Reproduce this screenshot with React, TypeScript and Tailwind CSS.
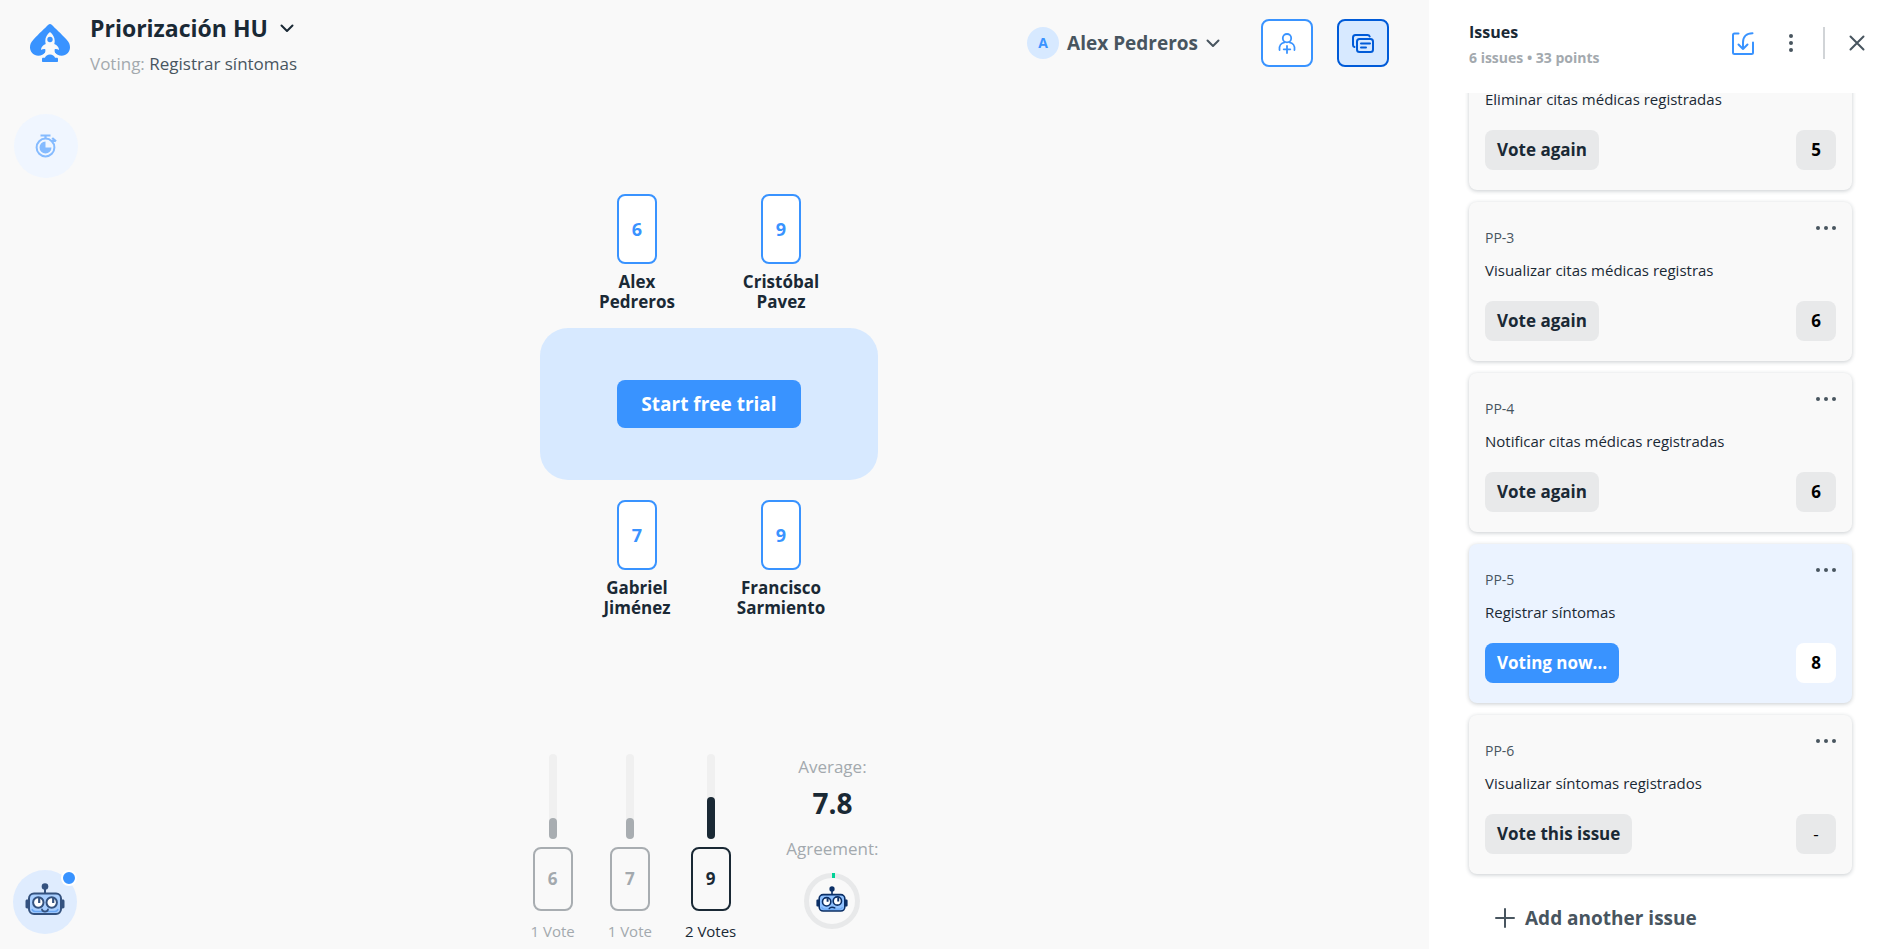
import type { ReactNode } from 'react';

type Issue = { id?: string; title: string; points: string; action: string; active?: boolean };

const issues: Issue[] = [
  { title: 'Eliminar citas médicas registradas', points: '5', action: 'Vote again' },
  { id: 'PP-3', title: 'Visualizar citas médicas registras', points: '6', action: 'Vote again' },
  { id: 'PP-4', title: 'Notificar citas médicas registradas', points: '6', action: 'Vote again' },
  { id: 'PP-5', title: 'Registrar síntomas', points: '8', action: 'Voting now...', active: true },
  { id: 'PP-6', title: 'Visualizar síntomas registrados', points: '-', action: 'Vote this issue' },
];

const topPlayers = [
  { first: 'Alex', last: 'Pedreros', vote: '6' },
  { first: 'Cristóbal', last: 'Pavez', vote: '9' },
];

const bottomPlayers = [
  { first: 'Gabriel', last: 'Jiménez', vote: '7' },
  { first: 'Francisco', last: 'Sarmiento', vote: '9' },
];

const results = [
  { value: '6', votes: 1, top: false },
  { value: '7', votes: 1, top: false },
  { value: '9', votes: 2, top: true },
];

const totalVotes = 4;

function Chevron() {
  return (
    <svg width="14" height="9" viewBox="0 0 14 9" fill="none" stroke="currentColor" strokeWidth="2" strokeLinecap="round" strokeLinejoin="round" aria-hidden="true">
      <path d="M1.500 1.500 7 7l5.500-5.500" />
    </svg>
  );
}

function Logo() {
  return (
    <svg width="40" height="38" viewBox="0 0 40 38" aria-hidden="true">
      <path fill="#3993ff" d="M20 0c.7 0 1.200.3 1.700.8C25 4.200 31 9.600 36.500 15.500 39 18.200 40 20.500 40 23.200c0 4.800-3.600 8.500-8.300 8.500-3.200 0-5.200-1.300-7.200-3.400h-9c-2 2.100-4 3.400-7.200 3.400C3.600 31.700 0 28 0 23.200c0-2.700 1-5 3.500-7.700C9 9.600 15 4.200 18.300.8c.5-.5 1-.8 1.700-.8z" />
      <path fill="#f9f9f9" d="M20 8c2.800 2.300 4.700 5.400 4.700 8.800 0 1.100-.1 2.100-.4 3.200 2.900 1.200 4.700 3.200 4.700 5.900-1.500-.8-3-1-4.300-.7-.4 2.300.2 4.300 2.300 6.300h-2.700C23.500 30.700 21.700 30 20 30s-3.500.7-4.300 1.500H13c2.100-2 2.700-4 2.300-6.300-1.300-.3-2.800-.1-4.300.7 0-2.700 1.800-4.700 4.700-5.900-.3-1.100-.4-2.100-.4-3.200C15.300 13.400 17.200 10.300 20 8z" />
      <circle cx="20" cy="15.500" r="2.700" fill="#3993ff" />
      <path fill="#3993ff" d="M20 30.500c2.500 0 4.400 1.300 5.100 3.300h1.700c.7 0 1.200.5 1.200 1.200v2c0 .6-.4 1-1 1H13c-.6 0-1-.4-1-1v-2c0-.7.5-1.200 1.200-1.200h1.700c.7-2 2.600-3.300 5.100-3.300z" />
    </svg>
  );
}

function Stopwatch() {
  return (
    <svg width="22" height="24" viewBox="0 0 22 24" fill="none" aria-hidden="true">
      <circle cx="10.500" cy="13.500" r="8.900" stroke="#85bbff" strokeWidth="2" />
      <path d="M10.500 7.500v6h6a6 6 0 1 1-6-6z" fill="#85bbff" />
      <path d="M5.500 1.500h10M10.500 1.500v3M17.200 4l3.800 3.400M19 5.400l-1.800 1.800" stroke="#85bbff" strokeWidth="2.200" />
    </svg>
  );
}

function InviteIcon() {
  return (
    <svg width="18" height="21" viewBox="0 0 18 21" fill="none" stroke="#3993ff" strokeWidth="1.800" strokeLinecap="round" aria-hidden="true">
      <circle cx="9" cy="5.200" r="4.200" />
      <path d="M1.500 17c-.6-4.300 1.800-7 5-7.600M16.500 17c.6-4.300-1.800-7-5-7.600M9 13v7M5.700 16.300h6.600" />
    </svg>
  );
}

function CardsIcon() {
  return (
    <svg width="22" height="19" viewBox="0 0 22 19" fill="none" stroke="#005bd8" strokeWidth="2" strokeLinecap="round" strokeLinejoin="round" aria-hidden="true">
      <rect x="5" y="5" width="16" height="13" rx="2.500" />
      <path d="M2.500 13C1.500 12.700 1 12 1 11V3.500C1 2 2 1 3.500 1h12c1.200 0 1.900.5 2.200 1.500M9 9.500h9M9 13.500h5" />
    </svg>
  );
}

function ImportIcon() {
  return (
    <svg width="22" height="23" viewBox="0 0 22 23" fill="none" stroke="#3993ff" strokeWidth="2" strokeLinecap="round" strokeLinejoin="round" aria-hidden="true">
      <path d="M6.500 1.500h-4C1.700 1.500 1 2.200 1 3v17.500c0 .8.700 1.500 1.500 1.500h17c.8 0 1.500-.7 1.500-1.500V10.500" />
      <path d="M20.500 1.300C14.500 1.300 11 4.800 11 10.500V17M6.500 12.500 11 17l4.500-4.500" />
    </svg>
  );
}

function Robot({ mood }: { mood: 'happy' | 'unsure' }) {
  const line = mood === 'happy' ? '#34527f' : '#0b2f66';
  const face = mood === 'happy' ? '#a9cfff' : '#8fc1ff';
  return (
    <svg className={mood === 'happy' ? 'h-8 w-10' : 'h-[26px] w-8'} viewBox="0 0 40 32" fill="none" aria-hidden="true">
      <path d="M20 4v7" stroke={line} strokeWidth="2" />
      <circle cx="20" cy="3.500" r="3.300" fill={line} />
      <path d="M4 16.500H2.200C1 16.500.5 17 .5 18.200v5.600c0 1.200.5 1.700 1.700 1.700H4zM36 16.500h1.800c1.200 0 1.700.5 1.700 1.700v5.600c0 1.200-.5 1.700-1.700 1.700H36z" fill={line} />
      <rect x="4" y="10.500" width="32" height="20.500" rx="5" fill={face} stroke={line} strokeWidth="2" />
      <path d="M7 26c.5 1.800 1.500 2.600 3.500 2.600h19c2 0 3-.8 3.500-2.600" stroke="#6ba8f5" strokeWidth="1.500" />
      <circle cx="13.300" cy="19.500" r="5.200" fill="#fff" stroke={line} strokeWidth="2" />
      <circle cx="26.700" cy={mood === 'happy' ? 19.5 : 18.5} r="5.200" fill="#fff" stroke={line} strokeWidth="2" />
      {mood === 'happy' ? (
        <>
          <path d="M14.200 15v5M28.200 15v5" stroke={line} strokeWidth="2.200" />
          <path d="M17 26.500c.6 2.700 5.400 2.700 6 0" stroke={line} strokeWidth="1.800" strokeLinecap="round" />
        </>
      ) : (
        <>
          <path d="M14.500 15v4.500M27.800 14.500V19" stroke={line} strokeWidth="2.400" />
          <path d="M16.500 28c1.500-2 5-2 7-.8" stroke={line} strokeWidth="1.800" strokeLinecap="round" />
        </>
      )}
    </svg>
  );
}

function Player({ first, last, vote }: { first: string; last: string; vote: string }) {
  return (
    <li className="flex w-36 flex-col items-center">
      <div className="flex h-[70px] w-10 items-center justify-center rounded-lg border-2 border-[#3993ff] bg-white text-lg font-bold text-[#3993ff]">
        {vote}
      </div>
      <div className="mt-2 text-center text-[17px] font-bold leading-5 text-[#1a2935]">
        {first}
        <br />
        {last}
      </div>
    </li>
  );
}

function IconButton({ label, className, children }: { label: string; className: string; children: ReactNode }) {
  return (
    <button type="button" aria-label={label} className={`flex items-center justify-center ${className}`}>
      {children}
    </button>
  );
}

function IssueCard({ issue }: { issue: Issue }) {
  return (
    <li
      className={`shrink-0 rounded-lg px-4 pb-5 pt-[18px] shadow-[0_1px_4px_rgba(26,41,53,0.24)] ${issue.active ? 'bg-[#ebf3ff]' : 'bg-[#f9f9f9]'}`}
    >
      {issue.id && (
        <div className="flex items-start justify-between">
          <span className="mt-2 text-sm leading-5 text-[#48555f]">{issue.id}</span>
          <IconButton label={`Options for ${issue.id}`} className="h-4 text-[#48555f]">
            <svg width="20" height="4" viewBox="0 0 20 4" fill="currentColor" aria-hidden="true">
              <circle cx="2" cy="2" r="2" />
              <circle cx="10" cy="2" r="2" />
              <circle cx="18" cy="2" r="2" />
            </svg>
          </IconButton>
        </div>
      )}
      <p className="mt-[11px] text-[15px] leading-[22px] text-[#1a2935]">{issue.title}</p>
      <div className="mt-5 flex items-center justify-between">
        <button
          type="button"
          className={`h-10 rounded-lg px-3 text-[17px] font-bold ${issue.active ? 'bg-[#3993ff] text-white' : 'bg-[#e8e9ea] text-[#1a2935]'}`}
        >
          {issue.action}
        </button>
        <button
          type="button"
          aria-label={`Points: ${issue.points}`}
          className={`h-10 w-10 rounded-lg text-[17px] text-black ${issue.points === '-' ? 'font-normal' : 'font-bold'} ${issue.active ? 'bg-white' : 'bg-[#e8e9ea]'}`}
        >
          {issue.points}
        </button>
      </div>
    </li>
  );
}

export default function App() {
  return (
    <div className="flex h-screen overflow-hidden bg-[#f9f9f9] font-['Open_Sans','Noto_Sans',sans-serif] text-[#1a2935]">
      <main className="relative flex min-w-0 flex-1 flex-col">
        <header className="flex items-start justify-between pl-[30px] pr-10">
          <div className="flex items-start">
            <a href="#" aria-label="Home" className="mt-6">
              <Logo />
            </a>
            <div className="ml-5 pt-3">
              <h1>
                <button type="button" className="flex items-center gap-3 text-[23px] font-bold leading-8">
                  Priorización HU
                  <Chevron />
                </button>
              </h1>
              <p className="mt-2 text-[17px] leading-6 text-[#48555f]">
                <span className="text-[#a3a9ae]">Voting:</span> Registrar síntomas
              </p>
            </div>
          </div>
          <div className="flex items-center pt-[19px]">
            <button type="button" className="flex items-center text-[19px] font-bold text-[#48555f]">
              <span className="mr-2 flex h-8 w-8 items-center justify-center rounded-full bg-[#d7e9ff] text-sm text-[#3993ff]">A</span>
              Alex Pedreros
              <span className="ml-2">
                <Chevron />
              </span>
            </button>
            <IconButton label="Invite players" className="ml-[41px] h-12 w-[52px] rounded-lg border-2 border-[#3993ff] bg-white">
              <InviteIcon />
            </IconButton>
            <IconButton label="Show issues" className="ml-6 h-12 w-[52px] rounded-lg border-2 border-[#005bd8] bg-[#d7e9ff]">
              <CardsIcon />
            </IconButton>
          </div>
        </header>

        <IconButton label="Timer" className="absolute left-3.5 top-[114px] h-16 w-16 rounded-full bg-[#f0f6ff]">
          <Stopwatch />
        </IconButton>

        <section aria-label="Table" className="flex flex-1 flex-col items-center justify-center pb-[18px] pr-[11px]">
          <ul className="flex">
            {topPlayers.map((p) => (
              <Player key={p.first} {...p} />
            ))}
          </ul>
          <div className="my-4 flex w-[338px] items-center justify-center rounded-[28px] bg-[#d7e9ff] py-[52px]">
            <button type="button" className="h-12 rounded-lg bg-[#3993ff] px-6 text-[19px] font-bold text-white">
              Start free trial
            </button>
          </div>
          <ul className="mt-1 flex">
            {bottomPlayers.map((p) => (
              <Player key={p.first} {...p} />
            ))}
          </ul>
        </section>

        <section aria-label="Results" className="flex items-end justify-center gap-[50px] pb-2 pr-5">
          <ul className="flex gap-[33px]">
            {results.map((r) => (
              <li key={r.value} className={`flex flex-col items-center ${r.top ? 'text-[#1a2935]' : 'text-[#a3a9ae]'}`}>
                <div className="flex h-[85px] w-2 items-end rounded-full bg-[#f0f0f0]">
                  <div
                    className={`w-2 rounded-full ${r.top ? 'bg-[#1a2935]' : 'bg-[#a8adb1]'}`}
                    style={{ height: `${(r.votes / totalVotes) * 100}%` }}
                  />
                </div>
                <div
                  className={`mt-2 flex h-16 w-10 items-center justify-center rounded-lg border-2 text-[17px] font-bold ${r.top ? 'border-[#1a2935]' : 'border-[#a8adb1]'}`}
                >
                  {r.value}
                </div>
                <span className="mt-2.5 text-[15px] leading-5">{r.votes === 1 ? '1 Vote' : `${r.votes} Votes`}</span>
              </li>
            ))}
          </ul>
          <div className="flex flex-col items-center pb-3 text-[17px] leading-6 text-[#a3a9ae]">
            <span>Average:</span>
            <span className="mt-1.5 text-[28px] font-bold leading-9 text-[#1a2935]">7.8</span>
            <span className="mt-4">Agreement:</span>
            <div className="mt-3 grid h-14 w-14 place-items-center">
              <svg className="col-start-1 row-start-1 h-14 w-14" viewBox="0 0 56 56" fill="none" aria-hidden="true">
                <circle cx="28" cy="28" r="25.500" stroke="#e8e9ea" strokeWidth="5" />
                <path d="M28 2.500h3" stroke="#00d296" strokeWidth="5" />
              </svg>
              <div className="col-start-1 row-start-1 -mt-1">
                <Robot mood="unsure" />
              </div>
            </div>
          </div>
        </section>

        <div className="absolute bottom-[15px] left-[13px]">
          <IconButton label="Assistant" className="h-16 w-16 rounded-full bg-[#dfecfe]">
            <span className="-mt-1.5">
              <Robot mood="happy" />
            </span>
          </IconButton>
          <span className="absolute right-0 top-0 h-4 w-4 rounded-full border-2 border-white bg-[#3993ff]" />
        </div>
      </main>

      <aside aria-label="Issues" className="flex w-[461px] shrink-0 flex-col bg-white">
        <header className="flex h-[93px] shrink-0 items-start justify-between pl-10 pr-[25px]">
          <div className="pt-5">
            <h2 className="text-base font-bold leading-6">Issues</h2>
            <p className="mt-1 text-sm font-bold leading-5 text-[#a3a9ae]">6 issues • 33 points</p>
          </div>
          <div className="flex items-center pt-[27px] text-[#48555f]">
            <IconButton label="Import issues" className="h-8">
              <ImportIcon />
            </IconButton>
            <IconButton label="More options" className="ml-[35px] h-8">
              <svg width="4" height="18" viewBox="0 0 4 18" fill="currentColor" aria-hidden="true">
                <circle cx="2" cy="2" r="2" />
                <circle cx="2" cy="9" r="2" />
                <circle cx="2" cy="16" r="2" />
              </svg>
            </IconButton>
            <span className="ml-[30px] h-8 w-0.5 bg-[#d1d4d7]" />
            <IconButton label="Close" className="ml-6 h-8">
              <svg width="16" height="16" viewBox="0 0 16 16" stroke="currentColor" strokeWidth="2" strokeLinecap="round" aria-hidden="true">
                <path d="m1.500 1.500 13 13M14.500 1.500l-13 13" />
              </svg>
            </IconButton>
          </div>
        </header>
        <div className="flex min-h-0 flex-1 flex-col justify-end overflow-hidden pl-10 pr-[38px]">
          <ul className="flex flex-col gap-3">
            {issues.map((issue) => (
              <IssueCard key={issue.title} issue={issue} />
            ))}
          </ul>
          <button type="button" className="mb-[7px] mt-5 flex h-12 shrink-0 items-center gap-2.5 self-start pl-[26px] text-[19px] font-bold text-[#48555f]">
            <svg width="20" height="20" viewBox="0 0 20 20" stroke="currentColor" strokeWidth="2" strokeLinecap="round" aria-hidden="true">
              <path d="M10 1v18M1 10h18" />
            </svg>
            Add another issue
          </button>
        </div>
      </aside>
    </div>
  );
}
